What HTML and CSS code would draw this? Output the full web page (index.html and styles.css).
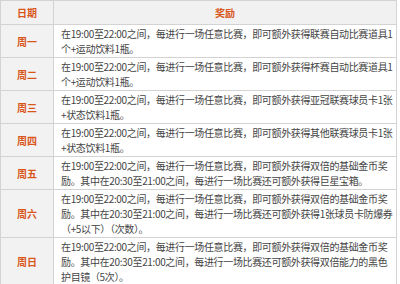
FILE: index.html
```html
<!DOCTYPE html>
<html>
<head>
<meta charset="utf-8">
<link rel="stylesheet" href="styles.css">
</head>
<body>
<table class="schedule">
  <colgroup>
    <col class="col-day">
    <col class="col-desc">
  </colgroup>
  <tr class="head">
    <th class="day">日期</th>
    <th class="reward">奖励</th>
  </tr>
  <tr>
    <td class="day">周一</td>
    <td class="desc">在19:00至22:00之间，每进行一场任意比赛，即可额外获得联赛自动比赛道具1<br>个+运动饮料1瓶。</td>
  </tr>
  <tr>
    <td class="day">周二</td>
    <td class="desc">在19:00至22:00之间，每进行一场任意比赛，即可额外获得杯赛自动比赛道具1<br>个+运动饮料1瓶。</td>
  </tr>
  <tr>
    <td class="day">周三</td>
    <td class="desc">在19:00至22:00之间，每进行一场任意比赛，即可额外获得亚冠联赛球员卡1张<br>+状态饮料1瓶。</td>
  </tr>
  <tr>
    <td class="day">周四</td>
    <td class="desc">在19:00至22:00之间，每进行一场任意比赛，即可额外获得其他联赛球员卡1张<br>+状态饮料1瓶。</td>
  </tr>
  <tr>
    <td class="day">周五</td>
    <td class="desc">在19:00至22:00之间，每进行一场任意比赛，即可额外获得双倍的基础金币奖<br>励。其中在20:30至21:00之间，每进行一场比赛还可额外获得巨星宝箱。</td>
  </tr>
  <tr>
    <td class="day">周六</td>
    <td class="desc">在19:00至22:00之间，每进行一场任意比赛，即可额外获得双倍的基础金币奖<br>励。其中在20:30至21:00之间，每进行一场比赛还可额外获得1张球员卡防爆券<br>（+5以下）（次数）。</td>
  </tr>
  <tr>
    <td class="day">周日</td>
    <td class="desc">在19:00至22:00之间，每进行一场任意比赛，即可额外获得双倍的基础金币奖<br>励。其中在20:30至21:00之间，每进行一场比赛还可额外获得双倍能力的黑色<br>护目镜（5次）。</td>
  </tr>
</table>
</body>
</html>
```
FILE: styles.css
```css
html, body {
  margin: 0;
  padding: 0;
  background: #ffffff;
}

.schedule {
  border-collapse: collapse;
  table-layout: fixed;
  width: 397px;
  font-family: "Noto Sans CJK SC", "Noto Sans", sans-serif;
  font-size: 10px;
  color: #444444;
}

.col-day {
  width: 53px;
}

.schedule th,
.schedule td {
  border: 1px solid #d3d3d3;
  padding: 1px 6px 1px 7px;
  line-height: 15px;
}

.schedule .head th {
  background: #f1f1f1;
  height: 23px;
  padding: 0;
  color: #d9561b;
  font-weight: bold;
  text-align: center;
}

.schedule .day {
  padding: 0;
  background: #f2f2f2;
  color: #d9561b;
  font-weight: bold;
  text-align: center;
  vertical-align: middle;
}

.schedule .desc {
  white-space: nowrap;
  letter-spacing: -0.35px;
  vertical-align: top;
}
```
